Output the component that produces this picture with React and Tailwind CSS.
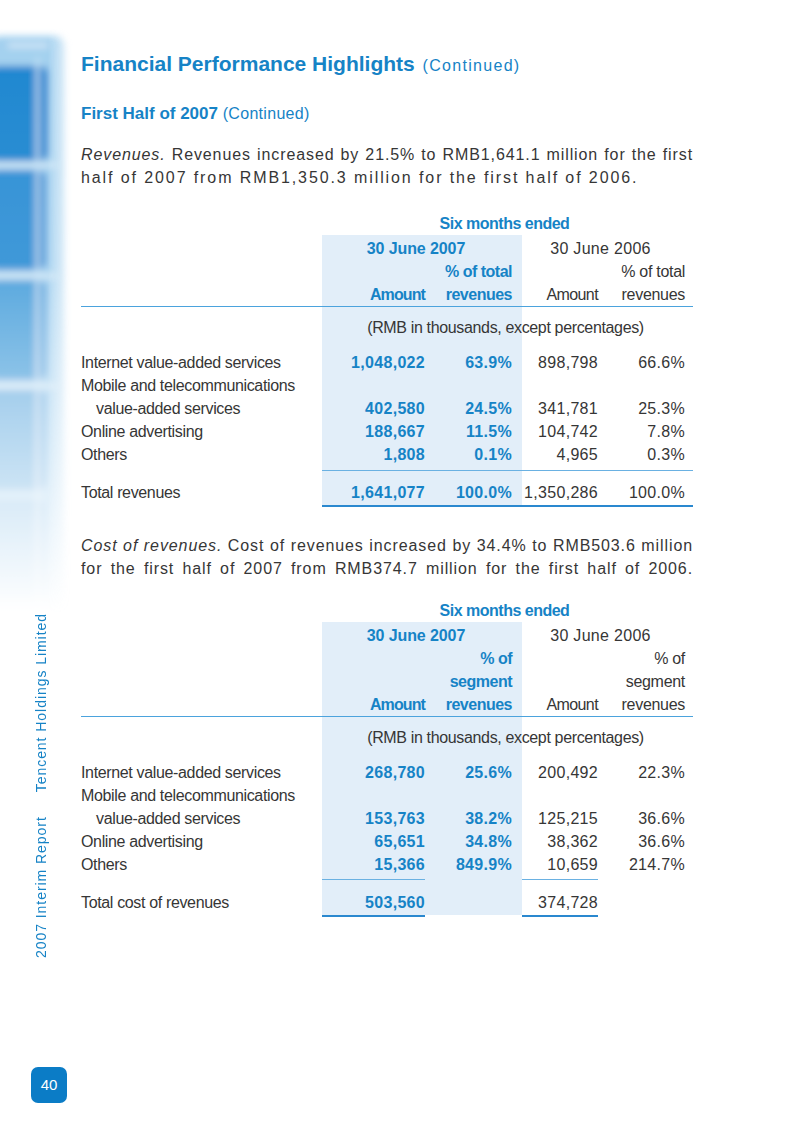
const BLUE = 'text-[#1683c6]';

const COLS = 'grid grid-cols-[241px_103px_97px_76px_95px]';
const NUM = 'tracking-[0.3px]';

const Row = ({ label, indent, a, b, c, d }) => (
  <div className={`${COLS} h-[23px] items-center leading-[23px]`}>
    <div className={`whitespace-nowrap tracking-[-0.35px] ${indent ? 'pl-[15px]' : ''}`}>{label}</div>
    <div className={`text-right font-bold ${NUM} ${BLUE}`}>{a}</div>
    <div className={`pr-[10px] text-right font-bold ${NUM} ${BLUE}`}>{b}</div>
    <div className={`text-right ${NUM}`}>{c}</div>
    <div className={`pr-[8px] text-right ${NUM}`}>{d}</div>
  </div>
);

const HeadRow = ({ b, d, a, c }) => (
  <div className={`${COLS} h-[23px] items-center leading-[23px]`}>
    <div />
    <div className={`text-right font-bold tracking-[-0.9px] ${BLUE}`}>{a}</div>
    <div className={`pr-[10px] text-right font-bold tracking-[-0.5px] ${BLUE}`}>{b}</div>
    <div className="text-right tracking-[-0.6px]">{c}</div>
    <div className="pr-[8px] text-right tracking-[-0.3px]">{d}</div>
  </div>
);

const SHADE =
  'bg-[linear-gradient(to_right,transparent_241px,#e2eef9_241px,#e2eef9_441px,transparent_441px)]';

const SixMonths = () => (
  <div className={`${COLS} h-[23px] items-center leading-[23px]`}>
    <div />
    <div className={`col-span-4 pr-[6px] text-center font-bold tracking-[-0.5px] ${BLUE}`}>Six months ended</div>
  </div>
);

const Dates = () => (
  <div className={`${COLS} h-[23px] items-center leading-[23px]`}>
    <div />
    <div className={`col-span-2 pr-[12px] text-center font-bold tracking-[-0.1px] ${BLUE}`}>30 June 2007</div>
    <div className="col-span-2 pr-[14px] text-center tracking-[0.3px]">30 June 2006</div>
  </div>
);

const Rmb = () => (
  <div className={`${COLS} h-[23px] items-center leading-[23px]`}>
    <div />
    <div className="col-span-4 pr-[4px] text-center tracking-[-0.35px]">(RMB in thousands, except percentages)</div>
  </div>
);

const revenueRows = [
  ['Internet value-added services', false, '1,048,022', '63.9%', '898,798', '66.6%'],
  ['Mobile and telecommunications', false, '', '', '', ''],
  ['value-added services', true, '402,580', '24.5%', '341,781', '25.3%'],
  ['Online advertising', false, '188,667', '11.5%', '104,742', '7.8%'],
  ['Others', false, '1,808', '0.1%', '4,965', '0.3%'],
];

const costRows = [
  ['Internet value-added services', false, '268,780', '25.6%', '200,492', '22.3%'],
  ['Mobile and telecommunications', false, '', '', '', ''],
  ['value-added services', true, '153,763', '38.2%', '125,215', '36.6%'],
  ['Online advertising', false, '65,651', '34.8%', '38,362', '36.6%'],
  ['Others', false, '15,366', '849.9%', '10,659', '214.7%'],
];

const Decoration = () => (
  <svg width="80" height="585" viewBox="0 0 80 585" className="block">
    <defs>
      <filter id="blur" x="-20%" y="-20%" width="140%" height="140%">
        <feGaussianBlur stdDeviation="3.5" />
      </filter>
      <linearGradient id="fadeDown" x1="0" y1="0" x2="0" y2="1">
        <stop offset="0" stopColor="#fff" stopOpacity="1" />
        <stop offset="0.4" stopColor="#fff" stopOpacity="0.9" />
        <stop offset="1" stopColor="#fff" stopOpacity="0" />
      </linearGradient>
      <linearGradient id="fadeRight" x1="0" y1="0" x2="1" y2="0">
        <stop offset="0" stopColor="#fff" stopOpacity="1" />
        <stop offset="0.6" stopColor="#fff" stopOpacity="1" />
        <stop offset="0.95" stopColor="#fff" stopOpacity="0" />
      </linearGradient>
      <mask id="m1">
        <rect x="0" y="0" width="80" height="585" fill="url(#fadeDown)" />
      </mask>
      <mask id="m2">
        <rect x="0" y="0" width="80" height="585" fill="url(#fadeRight)" />
      </mask>
    </defs>
    <g mask="url(#m1)">
      <g mask="url(#m2)">
        <g filter="url(#blur)">
          <rect x="-10" y="8" width="76" height="600" rx="10" fill="#a3d0ef" />
          <rect x="-10" y="38" width="58" height="95" rx="8" fill="#1e86d0" />
          <rect x="-10" y="142" width="56" height="100" rx="8" fill="#2a8dd4" />
          <rect x="-10" y="252" width="56" height="100" rx="8" fill="#419bd9" />
          <rect x="-10" y="362" width="56" height="100" rx="8" fill="#5ea9de" />
          <rect x="-10" y="472" width="56" height="100" rx="8" fill="#7ab8e4" />
          <rect x="-10" y="135" width="66" height="4" fill="#d6ebf8" />
          <rect x="-10" y="246" width="66" height="4" fill="#d6ebf8" />
          <rect x="-10" y="356" width="66" height="4" fill="#d6ebf8" />
          <rect x="36" y="30" width="3" height="560" fill="#c7e3f6" />
          <rect x="8" y="16" width="40" height="3" fill="#e6f3fb" />
        </g>
      </g>
    </g>
  </svg>
);

export default function App() {
  return (
    <div className="flex h-[1136px] w-[800px] bg-white font-['Liberation_Sans',Arial,sans-serif] text-[#363636]">
      <div className="flex w-[81px] shrink-0 flex-col">
        <div className="pt-[28px]">
          <Decoration />
        </div>
        <div className="flex h-[345px] items-end justify-center pl-[2px]">
          <div className="rotate-180 whitespace-nowrap text-[14px] tracking-[0.95px] text-[#1683c6] [writing-mode:vertical-rl]">
            2007 Interim Report<span className="inline-block h-[24px]" />Tencent Holdings Limited
          </div>
        </div>
        <div className="mt-auto mb-[33px] ml-[31px] flex h-[36px] w-[36px] items-center justify-center rounded-[7px] bg-[#0b7cc6] text-[15px] text-white">
          40
        </div>
      </div>

      <div className="w-[612px] pt-[49px] text-[16px]">
        <h1 className={`text-[21px] leading-[30px] font-bold ${BLUE}`}>
          Financial Performance Highlights{' '}
          <span className="ml-[2px] text-[16px] font-normal tracking-[1.3px]">(Continued)</span>
        </h1>

        <h2 className={`mt-[21px] text-[17px] leading-[24px] font-bold ${BLUE}`}>
          First Half of 2007 <span className="text-[16px] font-normal tracking-[0.3px]">(Continued)</span>
        </h2>

        <p className="mt-[17px] leading-[23px] tracking-[0.9px]">
          <span className="block whitespace-nowrap text-justify [text-align-last:justify]">
            <i>Revenues.</i> Revenues increased by 21.5% to RMB1,641.1 million for the first
          </span>
          <span className="block whitespace-nowrap tracking-[1.9px]">
            half of 2007 from RMB1,350.3 million for the first half of 2006.
          </span>
        </p>

        <div className="mt-[23px]">
          <SixMonths />
          <div className={SHADE}>
            <div className="h-[2px]" />
            <Dates />
            <HeadRow b="% of total" d="% of total" />
            <HeadRow a="Amount" b="revenues" c="Amount" d="revenues" />
            <div className="h-px bg-[#4ba3dd]" />
            <div className="h-[9px]" />
            <Rmb />
            <div className="h-[12px]" />
            {revenueRows.map((r) => (
              <Row key={r[0] + r[2]} label={r[0]} indent={r[1]} a={r[2]} b={r[3]} c={r[4]} d={r[5]} />
            ))}
            <div className="h-[4px]" />
            <div className="ml-[241px] h-px bg-[#6ab1e2]" />
            <div className="h-[10px]" />
            <Row label="Total revenues" a="1,641,077" b="100.0%" c="1,350,286" d="100.0%" />
            <div className="h-[1px]" />
          </div>
          <div className="ml-[241px] h-[2px] bg-[#2a88cf]" />
        </div>

        <p className="mt-[27px] leading-[23px] tracking-[0.9px]">
          <span className="block whitespace-nowrap text-justify [text-align-last:justify]">
            <i>Cost of revenues.</i> Cost of revenues increased by 34.4% to RMB503.6 million
          </span>
          <span className="block whitespace-nowrap text-justify [text-align-last:justify]">
            for the first half of 2007 from RMB374.7 million for the first half of 2006.
          </span>
        </p>

        <div className="mt-[19px]">
          <SixMonths />
          <div className={SHADE}>
            <div className="h-[2px]" />
            <Dates />
            <HeadRow b="% of" d="% of" />
            <HeadRow b="segment" d="segment" />
            <HeadRow a="Amount" b="revenues" c="Amount" d="revenues" />
            <div className="h-px bg-[#4ba3dd]" />
            <div className="h-[9px]" />
            <Rmb />
            <div className="h-[12px]" />
            {costRows.map((r) => (
              <Row key={r[0] + r[2]} label={r[0]} indent={r[1]} a={r[2]} b={r[3]} c={r[4]} d={r[5]} />
            ))}
            <div className="h-[3px]" />
            <div className={COLS}>
              <div />
              <div className="h-px bg-[#6ab1e2]" />
              <div />
              <div className="h-px bg-[#6ab1e2]" />
            </div>
            <div className="h-[11px]" />
            <Row label="Total cost of revenues" a="503,560" b="" c="374,728" d="" />
            <div className="h-[1px]" />
          </div>
          <div className={COLS}>
            <div />
            <div className="h-[2px] bg-[#2a88cf]" />
            <div />
            <div className="h-[2px] bg-[#2a88cf]" />
          </div>
        </div>
      </div>
    </div>
  );
}
